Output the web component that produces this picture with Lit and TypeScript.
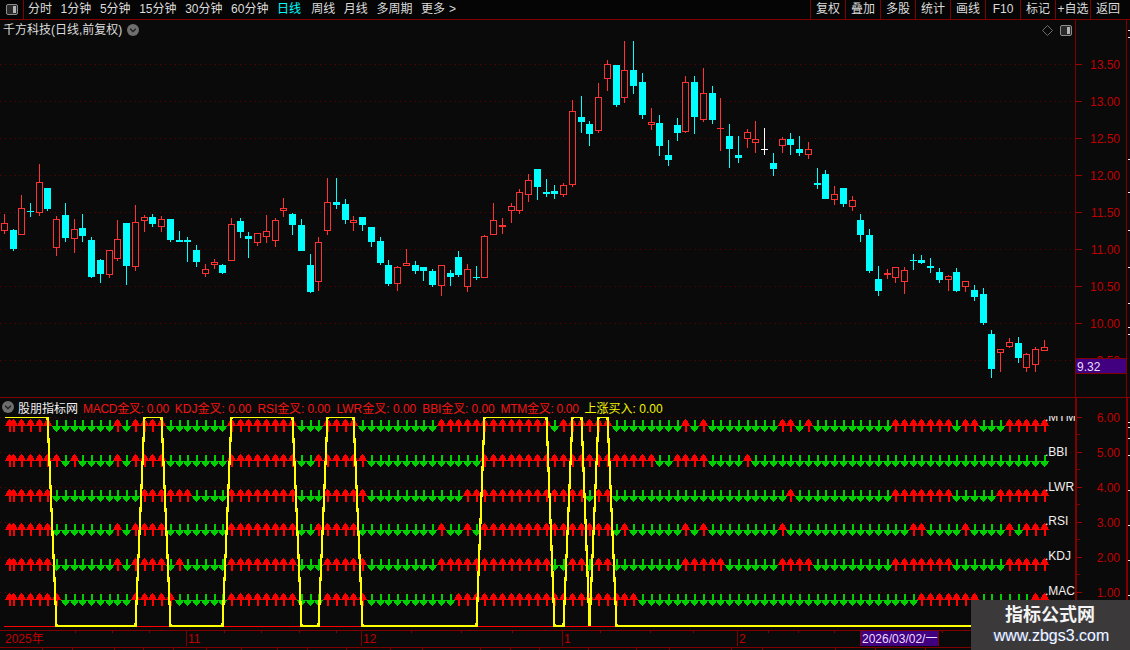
import { LitElement, html, css, svg } from "lit";
import { customElement } from "lit/decorators.js";

type C = [string, number, number, number, number];
const R = "#ff3232", Q = "#00ffff", W = "#ffffff";
// candles 0-64 measured on a 3x crop starting at y=130
const zoomed: C[] = [
  [R,252,280,304,312],[Q,297,300,357,363],[R,195,235,314,314],[Q,220,243,246,261],[R,102,157,248,258],
  [Q,174,174,237,243],[R,258,268,353,378],[Q,219,255,324,336],[R,267,298,326,369],[Q,252,294,318,336],
  [Q,321,330,441,444],[Q,387,390,432,459],[R,360,361,434,444],[R,270,328,386,393],[Q,279,279,408,465],
  [R,225,277,410,423],[R,255,262,272,306],[Q,252,261,282,291],[R,258,268,290,306],[Q,267,267,330,336],
  [Q,303,330,336,336],[Q,321,330,336,396],[Q,345,360,396,411],[R,402,418,431,441],[R,387,397,404,417],
  [Q,402,405,429,432],[R,264,283,392,392],[Q,264,273,306,324],[Q,306,318,327,384],[R,310,310,338,348],
  [R,255,304,320,339],[R,264,271,332,351],[R,204,235,242,261],[Q,249,252,285,315],[Q,267,285,363,363],
  [Q,372,405,486,489],[R,321,337,455,483],[R,144,217,302,315],[Q,144,216,225,237],[Q,207,222,270,282],
  [R,258,271,278,303],[Q,261,261,285,303],[Q,291,291,336,351],[Q,321,333,399,405],[Q,390,405,462,468],
  [R,408,411,462,483],[R,357,400,408,408],[Q,393,405,423,432],[Q,411,411,423,453],[Q,417,423,465,471],
  [R,405,405,468,498],[Q,420,429,441,468],[Q,363,381,435,441],[R,402,417,471,486],[Q,408,441,444,450],
  [R,315,318,444,444],[R,219,271,315,315],[R,264,285,291,312],[R,219,229,243,279],[R,177,187,243,252],
  [R,132,151,195,216],[Q,117,117,171,210],[Q,147,186,192,201],[Q,165,183,192,207],[R,159,166,195,201],
];
const real: C[] = [
  [R,100,111,185,187],[Q,96,117,122,133],[Q,121,124,134,146],[R,83,97,131,133],[R,60,64,79,91],
  [Q,65,65,105,107],[R,41,70,98,103],[Q,41,70,86,94],[Q,73,82,115,119],[R,108,122,125,130],
  [Q,115,123,146,156],[Q,140,155,160,166],[Q,118,125,133,141],[R,76,82,132,133],[Q,76,82,117,134],
  [R,68,93,120,122],[Q,86,93,120,124],[R,98,128,129,151],[Q,124,136,149,168],[Q,136,155,158,163],
  [R,129,132,139,148],[R,121,139,143,153],[W,128,149,150,155],[Q,153,163,169,176],[R,137,139,146,153],
  [Q,133,139,145,155],[Q,136,149,153,156],[R,142,149,155,159],[Q,168,183,185,189],[Q,170,174,199,199],
  [R,186,194,200,205],[Q,188,188,204,207],[R,196,200,207,211],[Q,214,220,235,242],[Q,229,235,271,273],
  [Q,266,279,291,296],[R,269,273,275,279],[R,267,267,278,283],[R,267,270,282,294],[Q,254,260,261,270],
  [Q,255,260,263,264],[Q,258,266,268,273],[Q,268,272,280,283],[R,275,276,280,291],[Q,268,272,291,292],
  [R,281,281,287,292],[Q,285,290,297,301],[Q,288,294,323,325],[Q,330,334,369,378],[R,349,349,353,372],
  [R,338,342,347,348],[Q,337,343,358,363],[R,353,354,368,372],[R,347,349,365,372],[R,340,347,351,351],
];
const candles: C[] = [
  ...zoomed.map(([c, a, b, d, e]): C => [c, Math.round(a / 3 + 130), Math.round(b / 3 + 130), Math.round(d / 3 + 130), Math.round(e / 3 + 130)]),
  ...real,
];
const px = (i: number) => Math.floor(4.27 + 8.74 * i);

const rows: { name: string; top: number; label: number; red: [number, number][] }[] = [
  { name: ".MTM", top: 419, label: 421, red: [[1,5],[13,13],[15,18],[26,33],[37,40],[50,62],[64,69],[78,78],[80,80],[89,90],[92,92],[102,108],[110,111],[115,119]] },
  { name: ".BBI", top: 454, label: 456, red: [[1,6],[8,8],[13,13],[15,18],[26,33],[36,41],[55,74],[77,80],[85,85]] },
  { name: ".LWR", top: 489, label: 491, red: [[1,5],[16,21],[26,33],[37,41],[53,66],[68,69],[90,90],[102,108],[114,119]] },
  { name: ".RSI", top: 523, label: 525, red: [[1,5],[13,13],[15,18],[26,33],[36,40],[50,50],[53,53],[55,69],[71,71],[78,78],[80,80],[89,89],[104,105],[110,110],[115,115],[117,119]] },
  { name: ".KDJ", top: 558, label: 560, red: [[1,5],[13,13],[15,18],[20,20],[26,33],[37,41],[50,62],[65,66],[68,69],[78,82],[89,92],[102,108],[115,119]] },
  { name: ".MACD", top: 593, label: 595, red: [[1,6],[15,19],[26,33],[37,41],[52,72],[105,111],[118,119]] },
];
const high: [number, number][] = [[0,5],[16,18],[26,33],[37,40],[55,62],[65,66],[68,69]];
const linePts = Array.from({ length: 120 }, (_, i) => {
  const up = high.some(([a, b]) => i >= a && i <= b);
  return `${px(i) + 0.5},${up ? 417 : 626}`;
}).join(" ");

const rowRect = (p: number, y: number, w: number) => `M${p - (w - 1) / 2} ${y}h${w}v1h${-w}z`;
const upArrow = (p: number, y: number) => {
  const head = [1, 3, 5, 5, 7, 7, 9].map((w, r) => rowRect(p, y + r, w)).join("");
  return svg`<path d="${head}M${p} ${y + 7}h2v6h-2z" fill="#ff0000"/>`;
};
const downArrow = (p: number, y: number) => {
  const head = [9, 7, 7, 5, 3, 1].map((w, r) => rowRect(p, y + 7 + r, w)).join("");
  return svg`<path d="M${p} ${y + 1}h2v6h-2z${head}" fill="#00d000"/>`;
};

const PRICE = [13.5, 13, 12.5, 12, 11.5, 11, 10.5, 10, 9.5];
const priceY = (p: number) => Math.round(64 + (13.5 - p) * 74);
const SUB = [6, 5, 4, 3, 2, 1];
const subY = (v: number) => Math.round(417.3 + (6 - v) * 34.85);
const timeTicks = [75,112,149,224,261,299,336,411,461,512,600,650,693,768,798,834,905,942,980,1020,1060];
const tabCells = [43,30,42,29,30,33,35,36,30,39,44,32,58,30,29,49,48,33,62,31,73,40,50,60,50,69];
const edgeTicks = [30,37,159,192,230,267,303,327,334];
const edgeTicksLow = [422,427,438,455,490,525,560,595,630];
const notes = ["MACD金叉", "KDJ金叉", "RSI金叉", "LWR金叉", "BBI金叉", "MTM金叉"];

const chevronDot = () => html`<svg class="dot" viewBox="0 0 12 12"><circle cx="6" cy="6" r="6" fill="#6e6e6e"/><path d="M3.2 4.8L6 7.6L8.8 4.8" fill="none" stroke="#1c1c1c" stroke-width="1.3"/></svg>`;
const panelIcon = () => html`<svg class="panel-icon" viewBox="0 0 12 11"><rect x="0.5" y="0.5" width="11" height="10" rx="1.5" fill="#2a2a2a" stroke="#8c8c8c"/><rect x="7" y="2" width="3" height="7" fill="#b4b4b4"/></svg>`;

@customElement("app-root")
export class AppRoot extends LitElement {
  static styles = css`
    :host { display: block; position: relative; width: 1130px; height: 650px; overflow: hidden; background: #0a0a0a;
      font: 12px "Liberation Sans", "Noto Sans CJK SC", sans-serif; color: #dcdcdc; }
    svg { display: block; }
    svg text { font-family: "Liberation Sans", "Noto Sans CJK SC", sans-serif; font-size: 12px; }
    .toolbar { display: flex; align-items: center; height: 19px; border-bottom: 1px solid #800000; background: #050505; }
    .menu { display: flex; align-items: center; justify-content: center; width: 23px; height: 19px; border-right: 1px solid #800000; box-sizing: content-box; }
    .panel-icon { width: 12px; height: 11px; }
    .tabs { display: flex; gap: 8.6px; margin-left: 4px; line-height: 19px; white-space: nowrap; }
    .tabs .on { color: #00ffff; margin-right: 1.6px; }
    .tabs .more i { font-style: normal; margin-left: 4px; }
    .btns { display: flex; margin-left: auto; height: 19px; }
    .btn { width: 34px; border-left: 1px solid #800000; text-align: center; line-height: 19px; white-space: nowrap; }
    .btn.last { width: 34px; padding-left: 5px; text-align: left; }
    .main { display: flex; height: 377px; border-bottom: 1px solid #800000; }
    .plot { position: relative; width: 1075px; flex: none; }
    .axis { flex: none; }
    .title { position: absolute; left: 3px; top: 3px; display: flex; align-items: center; gap: 5px; line-height: 14px; white-space: nowrap; }
    .dot { width: 12px; height: 12px; }
    .tools { position: absolute; right: 3px; top: 5px; display: flex; align-items: center; gap: 7px; }
    .diamond { width: 11px; height: 11px; }
    .sub { display: flex; height: 232px; }
    .sub-head { position: absolute; left: 2px; top: 1px; height: 16px; display: flex; align-items: center; white-space: nowrap; color: #f0f0f0; }
    .sub-head .name { margin-left: 4px; }
    .ind { display: flex; gap: 6px; margin-left: 5px; color: #f01414; }
    .ind .n0 { letter-spacing: -0.3px; }
    .ind .n2 { letter-spacing: -0.1px; }
    .ind .n4 { letter-spacing: -0.1px; }
    .ind .n5 { letter-spacing: -0.3px; }
    .ind .buy { color: #f4f400; }
    .time { height: 16px; border-top: 1px solid #800000; border-bottom: 1px solid #800000; }
    .strip { display: flex; height: 20px; overflow: hidden; }
    .cell { flex: none; box-sizing: border-box; border-right: 1px solid #800000; padding: 1px 0 0 8px; white-space: nowrap; line-height: 16px; }
    .cell.on { color: #00e8e8; }
    .mark { position: absolute; left: 971px; top: 600px; width: 159px; height: 50px; background: #3b3939;
      display: flex; flex-direction: column; align-items: center; }
    .mark b { font-size: 18px; line-height: 20px; margin-top: 5px; color: #f4f4f4; font-weight: 700; margin-left: -1px; }
    .mark span { font-size: 16px; line-height: 20px; margin-top: 1px; margin-left: 2px; color: #f6f8ff; text-shadow: -1px 0 rgba(63, 111, 208, 0.6); }
  `;

  render() {
    return html`
      <div class="toolbar">
        <div class="menu">${panelIcon()}</div>
        <div class="tabs">
          <span>分时</span><span>1分钟</span><span>5分钟</span><span>15分钟</span><span>30分钟</span><span>60分钟</span>
          <span class="on">日线</span><span>周线</span><span>月线</span><span>多周期</span><span class="more">更多<i>&gt;</i></span>
        </div>
        <div class="btns">
          ${["复权", "叠加", "多股", "统计", "画线", "F10", "标记", "+自选"].map((t) => html`<div class="btn">${t}</div>`)}
          <div class="btn last">返回</div>
        </div>
      </div>

      <div class="main">
        <div class="plot">
          <svg width="1075" height="377" viewBox="0 20 1075 377" shape-rendering="crispEdges">
            ${PRICE.map((p) => svg`<line x1="0" x2="1075" y1=${priceY(p) + 0.5} y2=${priceY(p) + 0.5} stroke="#640000" stroke-dasharray="1 4"/>`)}
            ${candles.map(([c, hi, top, bot, lo], i) => {
              const x = px(i);
              const solid = c !== R || bot - top < 3;
              return svg`
                <rect x=${x} y=${hi} width="1" height=${Math.max(lo - hi, 1)} fill=${c}/>
                ${solid
                  ? svg`<rect x=${x - 3} y=${top} width="7" height=${Math.max(bot - top, 1)} fill=${c}/>`
                  : svg`<rect x=${x - 2.5} y=${top + 0.5} width="6" height=${bot - top - 1} fill="#0a0a0a" stroke=${c}/>`}`;
            })}
          </svg>
          <div class="title"><span>千方科技(日线,前复权)</span>${chevronDot()}</div>
          <div class="tools">
            <svg class="diamond" viewBox="0 0 11 11"><path d="M5.5 0.5L10.5 5.5L5.5 10.5L0.5 5.5Z" fill="none" stroke="#6e6e6e"/></svg>
            ${panelIcon()}
          </div>
        </div>
        <svg class="axis" width="55" height="377" viewBox="1075 20 55 377" shape-rendering="crispEdges">
          <rect x="1075" y="20" width="1" height="377" fill="#800000"/>
          <rect x="1126" y="20" width="1" height="377" fill="#800000"/>
          ${PRICE.map((p) => svg`<rect x="1076" y=${priceY(p)} width="6" height="1" fill="#a00000"/>
            <rect x="1076" y=${priceY(p) + 37} width="3" height="1" fill="#800000"/>
            <text x="1120" y=${priceY(p) + 5} text-anchor="end" fill="#c00000" shape-rendering="auto">${p.toFixed(2)}</text>`)}
          ${edgeTicks.map((y) => svg`<rect x="1128" y=${y} width="2" height="1" fill="#e8e8e8"/>`)}
          <rect x="1076" y="358" width="50" height="16" fill="#800000"/>
          <rect x="1076" y="359" width="50" height="14" fill="#400080"/>
          <text x="1077" y="371" fill="#e8dcff">9.32</text>
        </svg>
      </div>

      <div class="sub">
        <div class="plot">
          <svg width="1075" height="232" viewBox="0 398 1075 232" shape-rendering="crispEdges">
            <defs>
              <clipPath id="lineClip"><rect x="0" y="417" width="1075" height="210"/></clipPath>
              <clipPath id="labelClip"><rect x="0" y="416" width="1075" height="214"/></clipPath>
            </defs>
            ${SUB.map((v) => svg`<line x1="0" x2="1075" y1=${subY(v) + 0.5} y2=${subY(v) + 0.5} stroke="#640000" stroke-dasharray="1 4"/>`)}
            <rect x="4" y="626" width="1041" height="1" fill="#ff0000"/>
            ${rows.map((row) => svg`
              ${upArrow(9, row.top)}
              ${Array.from({ length: 119 }, (_, k) => {
                const i = k + 1;
                const p = px(i);
                return row.red.some(([a, b]) => i >= a && i <= b) ? upArrow(p, row.top) : downArrow(p, row.top);
              })}
              <text x="1045" y=${row.label} fill="#f0f0f0" clip-path="url(#labelClip)" shape-rendering="auto">${row.name}</text>`)}
            <polyline points=${linePts} fill="none" stroke="#ffff00" stroke-width="2.2" clip-path="url(#lineClip)"/>
          </svg>
          <div class="sub-head">
            ${chevronDot()}<span class="name">股朋指标网</span>
            <div class="ind">
              ${notes.map((n, i) => html`<span class="n${i}">${n}: 0.00</span>`)}
              <span class="buy">上涨买入: 0.00</span>
            </div>
          </div>
        </div>
        <svg class="axis" width="55" height="232" viewBox="1075 398 55 232" shape-rendering="crispEdges">
          <rect x="1075" y="398" width="2" height="232" fill="#800000"/>
          <rect x="1126" y="398" width="2" height="232" fill="#800000"/>
          ${SUB.map((v) => svg`<rect x="1077" y=${subY(v)} width="5" height="1" fill="#a00000"/>
            <rect x="1077" y=${subY(v) + 17} width="3" height="1" fill="#800000"/>
            <text x="1120" y=${subY(v) + 5} text-anchor="end" fill="#c00000" shape-rendering="auto">${v.toFixed(2)}</text>`)}
          ${edgeTicksLow.map((y) => svg`<rect x="1128" y=${y} width="2" height="1" fill="#e8e8e8"/>`)}
        </svg>
      </div>

      <div class="time">
        <svg width="1130" height="16" viewBox="0 631 1130 16" shape-rendering="crispEdges">
          ${timeTicks.map((x) => svg`<rect x=${x} y="631" width="1" height="2" fill="#800000"/>`)}
          ${[[186, "11"], [361, "12"], [562, "1"], [737, "2"]].map(([x, t]) => svg`
            <rect x=${x} y="631" width="1" height="15" fill="#800000"/>
            <text x=${(x as number) + 2} y="643" fill="#c00000" shape-rendering="auto">${t}</text>`)}
          <text x="5" y="643" fill="#c00000" shape-rendering="auto">2025年</text>
          <rect x="860" y="631" width="79" height="15" fill="#800000"/>
          <rect x="861" y="631" width="77" height="15" fill="#400080"/>
          <text x="862" y="643" fill="#e8dcff" shape-rendering="auto">2026/03/02/一</text>
        </svg>
      </div>

      <div class="strip">
        ${tabCells.map((w, i) => html`<div class="cell ${i === 20 ? "on" : ""}" style="width:${w}px">${i === 0 ? "指标" : i === 20 ? "模板" : ""}</div>`)}
      </div>

      <div class="mark"><b>指标公式网</b><span>www.zbgs3.com</span></div>
    `;
  }
}
